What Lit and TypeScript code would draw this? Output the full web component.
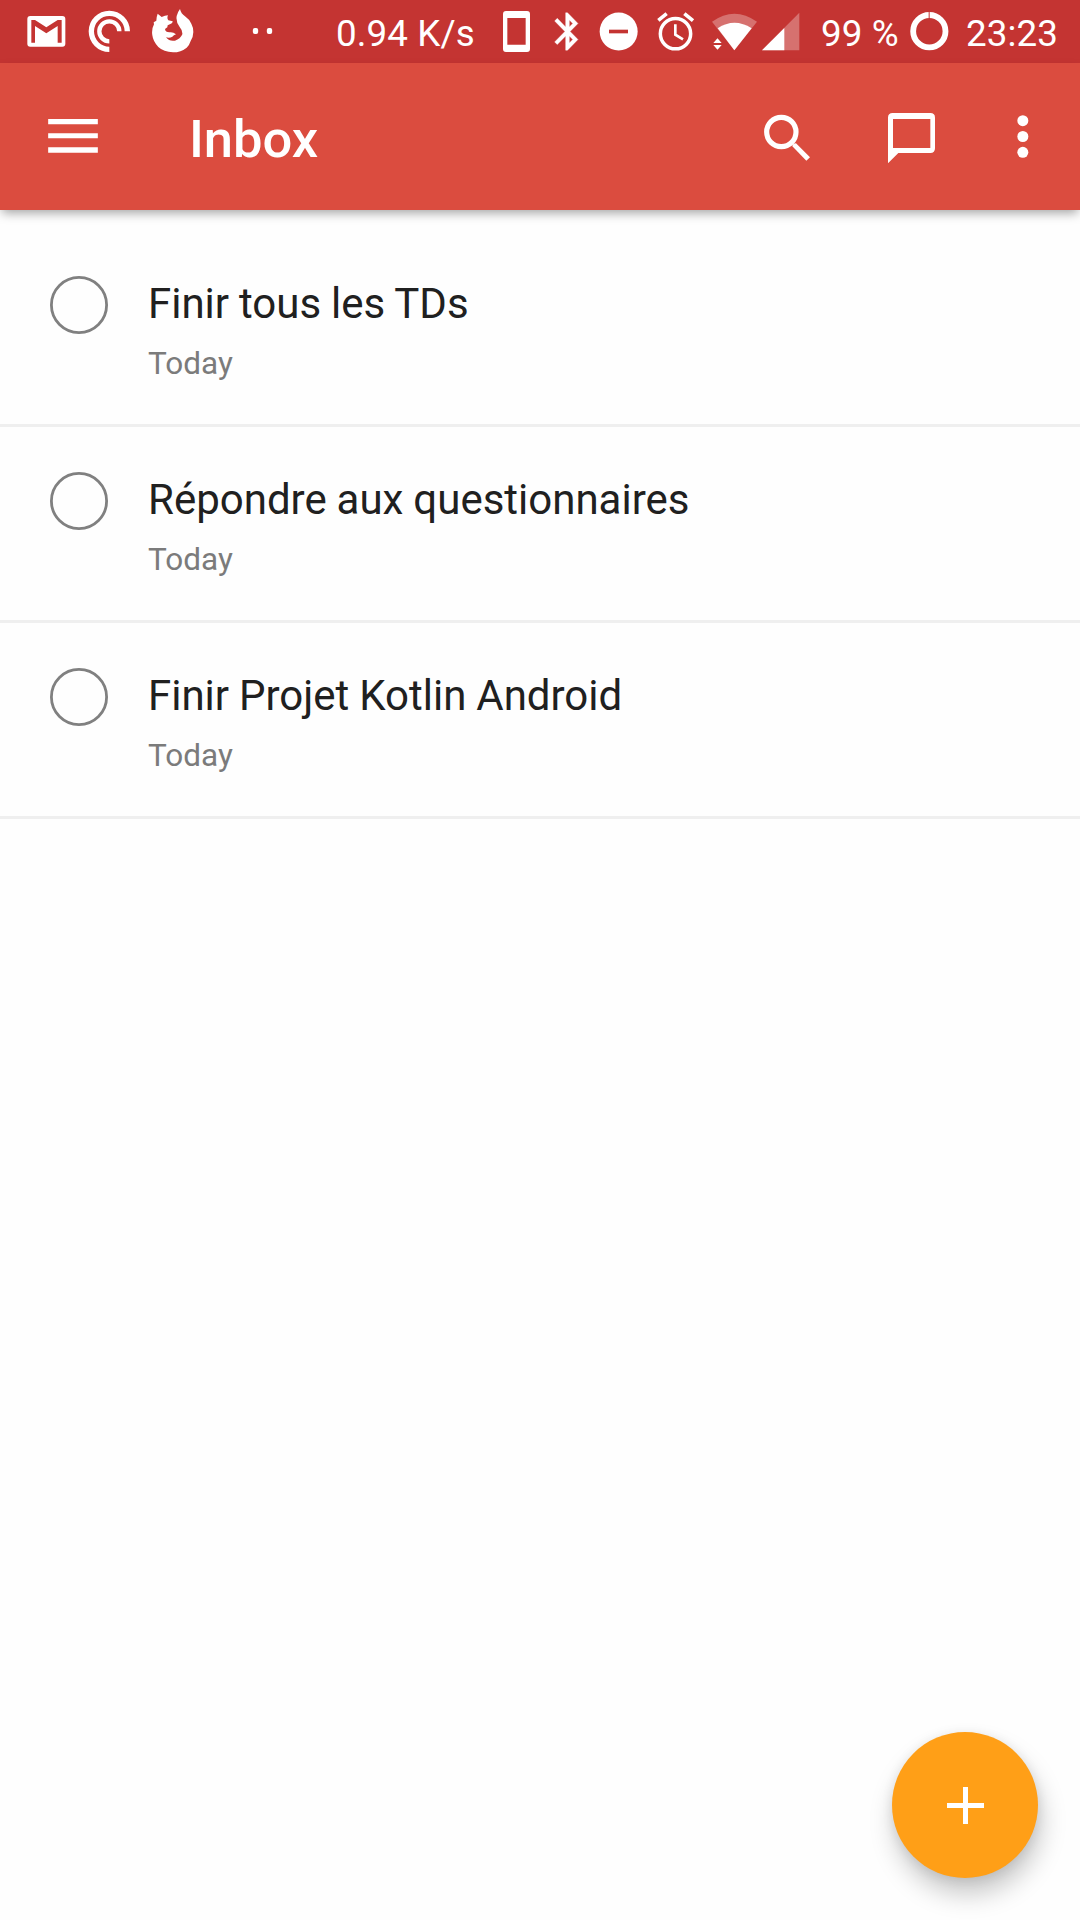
import { LitElement, html, svg, css } from "lit";
import { customElement, property } from "lit/decorators.js";

interface Task {
  title: string;
  due: string;
}

const TASKS: Task[] = [
  { title: "Finir tous les TDs", due: "Today" },
  { title: "Répondre aux questionnaires", due: "Today" },
  { title: "Finir Projet Kotlin Android", due: "Today" },
];

// Status icons are drawn on a grid three units to the pixel, 189 units tall.
const glyph = (name: string, x: number, units: number, body: unknown) => html`
  <svg class="glyph ${name}" width=${units / 3} height="63" viewBox="${x} 0 ${units} 189">${body}</svg>
`;

@customElement("status-bar")
class StatusBar extends LitElement {
  static styles = css`
    :host {
      display: flex;
      align-items: center;
      height: 63px;
      background: #c43432;
      color: #fff;
      font: 400 36.75px/43px Roboto, sans-serif;
      white-space: nowrap;
    }
    .glyph { display: block; flex: none; fill: #fff; }
    .mail { margin-left: 27px; }
    .cast { margin-left: 22px; }
    .fox { margin-left: 21px; }
    .more { margin-left: 58px; }
    .text { flex: none; padding-top: 4px; letter-spacing: 0.1px; }
    .speed { width: 141px; margin-left: 63px; }
    .phone { margin-left: 26px; }
    .bluetooth { margin-left: 23px; }
    .dnd { margin-left: 20px; }
    .alarm { margin-left: 19px; }
    .wifi { margin-left: 17px; }
    .signal { margin-left: 4px; }
    .percent { width: 79px; margin-left: 21px; }
    .battery { margin-left: 10px; }
    .clock { margin-left: 17px; }
  `;

  render() {
    return html`
      ${glyph("mail", 81, 117, svg`
        <rect x="82" y="48" width="114" height="92" rx="9"/>
        <path fill="#c43432" d="M94 60H105L139 82L173 60H185V128H173V78L139 100L105 78V128H94Z"/>`)}
      ${glyph("cast", 264, 129, svg`
        <g fill="none" stroke="#fff">
          <path stroke-width="16" d="M328 148A54 54 0 1 1 382 94"/>
          <path stroke-width="13" d="M328 124A30 30 0 1 1 358 94"/>
        </g>`)}
      ${glyph("fox", 456, 126, svg`
        <path d="M473 41L485 51Q495 46 504 46Q500 54 505 61L518 64Q519 70 503 76L502 82L495 87Q496 97 508 97Q519 95 528 103Q521 105 517 110Q509 115 498 112Q508 125 525 122Q541 117 547 103Q548 91 539 81Q527 66 530 48Q533 36 540 27Q543 41 555 49Q568 58 574 71Q580 82 580 96Q580 110 572 123Q568 136 560 143Q543 157 519 157Q491 156 475 141Q459 124 457 106Q454 88 462 73L461 67L469 62Q469 51 473 41Z"/>`)}
      ${glyph("more", 756, 63, svg`
        <rect x="758.500" y="84" width="16" height="18" rx="6"/><rect x="800.500" y="84" width="16" height="18" rx="6"/>`)}
      <span class="text speed">0.94 K/s</span>
      ${glyph("phone", 609, 81, svg`
        <path fill-rule="evenodd" d="M618 33H681Q690 33 690 42V147Q690 156 681 156H618Q609 156 609 147V42Q609 33 618 33ZM622 54V134H677V54Z"/>`)}
      ${glyph("bluetooth", 759, 78, svg`
        <path transform="translate(736.500 27) scale(5.500 5.620)" stroke="#fff" stroke-width=".2" d="M17.710 7.710L12 2h-1v7.590L6.410 5 5 6.410 10.590 12 5 17.590 6.410 19 11 14.410V22h1l5.710-5.710-4.300-4.290 4.300-4.290zM13 5.830l1.880 1.880L13 9.590V5.830zm1.880 10.460L13 18.170v-3.760l1.880 1.880z"/>`)}
      ${glyph("dnd", 57, 117, svg`
        <circle cx="116" cy="94.500" r="57"/><path fill="#c43432" d="M87 89H144V100H87Z"/>`)}
      ${glyph("alarm", 231, 114, svg`
        <g fill="none" stroke="#fff">
          <circle cx="286.500" cy="101" r="45.500" stroke-width="10.500"/>
          <path stroke-width="11" d="M235 61L260 41M313 41L339 62"/>
          <path stroke-width="8" d="M286 73V104L309 118"/>
        </g>`)}
      ${glyph("wifi", 396, 138, svg`
        <path opacity=".3" d="M396 65Q463 17 531 65L463 151Z"/>
        <path d="M413 85Q463 52 515 85L463 151Z"/>
        <path d="M400 129H425L412.500 115ZM400 135H425L412.500 149Z"/>`)}
      ${glyph("signal", 546, 114, svg`
        <path opacity=".3" d="M546 151H658V38Z"/><path d="M546 151H613V84Z"/>`)}
      <span class="text percent">99 %</span>
      ${glyph("battery", 329, 117, svg`
        <circle cx="387" cy="93.500" r="48.500" fill="none" stroke="#fff" stroke-width="17.500"/>
        <path fill="#c43432" d="M385 34H388V54H385Z"/>`)}
      <span class="text clock">23:23</span>
    `;
  }
}

@customElement("app-bar")
class AppBar extends LitElement {
  static styles = css`
    :host {
      display: flex;
      align-items: center;
      height: 147px;
      box-sizing: border-box;
      padding: 0 51px 0 48px;
      background: #db4c3f;
      color: #fff;
      box-shadow: 0 5px 10px -2px rgba(0, 0, 0, 0.36);
    }
    svg { display: block; flex: none; fill: #fff; }
    h1 {
      flex: 1;
      margin: 0 0 0 91px;
      padding-top: 5px;
      font: 500 52.5px/62px Roboto, sans-serif;
    }
    .chat { margin-left: 76px; }
    .overflow { margin-left: 82px; }
  `;

  // The viewBoxes use three units to the pixel and span the bar's height.
  render() {
    return html`
      <svg width="50" height="147" viewBox="144 9 150 441">
        <path d="M144.500 177H293.500V192.500H144.500ZM144.500 219.500H293.500V235H144.500ZM144.500 262H293.500V278H144.500Z"/>
      </svg>
      <h1>Inbox</h1>
      <svg width="48" height="147" viewBox="129 9 144 441">
        <circle cx="184" cy="216" r="44" fill="none" stroke="#fff" stroke-width="15.500"/>
        <path d="M217 259Q218 250 228 250L270 292L259 302Z"/>
      </svg>
      <svg class="chat" width="48" height="147" viewBox="501 9 144 441">
        <path fill-rule="evenodd" d="M518 159H631Q645 159 645 173V265Q645 279 631 279H535L504 310V173Q504 159 518 159ZM519 177V264H631V177Z"/>
      </svg>
      <svg class="overflow" width="12" height="147" viewBox="890 9 36 441">
        <circle cx="907.500" cy="182" r="16.500"/><circle cx="907.500" cy="229.500" r="16.500"/><circle cx="907.500" cy="277" r="16.500"/>
      </svg>
    `;
  }
}

@customElement("task-row")
class TaskRow extends LitElement {
  static styles = css`
    :host {
      display: flex;
      align-items: flex-start;
      gap: 40px;
      height: 196px;
      box-sizing: border-box;
      padding: 45px 50px 0;
      border-bottom: 3px solid #efefef;
      font-family: Roboto, sans-serif;
    }
    .check {
      flex: none;
      width: 58px;
      height: 58px;
      display: block;
      fill: none;
      stroke: #808080;
      stroke-width: 2.8;
    }
    .title { color: #202020; font-size: 42px; line-height: 49px; padding-top: 3px; word-spacing: -0.5px; }
    .due { color: #7b7b7b; font-size: 31.5px; line-height: 37px; margin-top: 17px; }
  `;

  @property({ attribute: false }) task!: Task;

  render() {
    return html`
      <svg class="check" viewBox="0 0 58 58"><circle cx="29" cy="29" r="27.600"/></svg>
      <div>
        <div class="title">${this.task.title}</div>
        <div class="due">${this.task.due}</div>
      </div>
    `;
  }
}

@customElement("app-root")
class AppRoot extends LitElement {
  static styles = css`
    :host {
      display: flex;
      flex-direction: column;
      position: relative;
      width: 1080px;
      height: 1920px;
      overflow: hidden;
      background: #fefefe;
    }
    status-bar, app-bar { flex: none; }
    .list { flex: 1; padding-top: 21px; }
    .add {
      position: absolute;
      right: 42px;
      bottom: 42px;
      width: 146px;
      height: 146px;
      padding: 0;
      border: 0;
      border-radius: 50%;
      background: #ff9f17;
      box-shadow: 3px 16px 26px rgba(0, 0, 0, 0.22), 0 2px 12px rgba(0, 0, 0, 0.09);
    }
    .add svg { display: block; }
  `;

  render() {
    return html`
      <status-bar></status-bar>
      <app-bar></app-bar>
      <main class="list">${TASKS.map((t) => html`<task-row .task=${t}></task-row>`)}</main>
      <button class="add">
        <svg width="146" height="146" viewBox="0 0 146 146">
          <path fill="#fff" d="M71 55H76V71H92V76H76V92H71V76H55V71H71Z"/>
        </svg>
      </button>
    `;
  }
}
